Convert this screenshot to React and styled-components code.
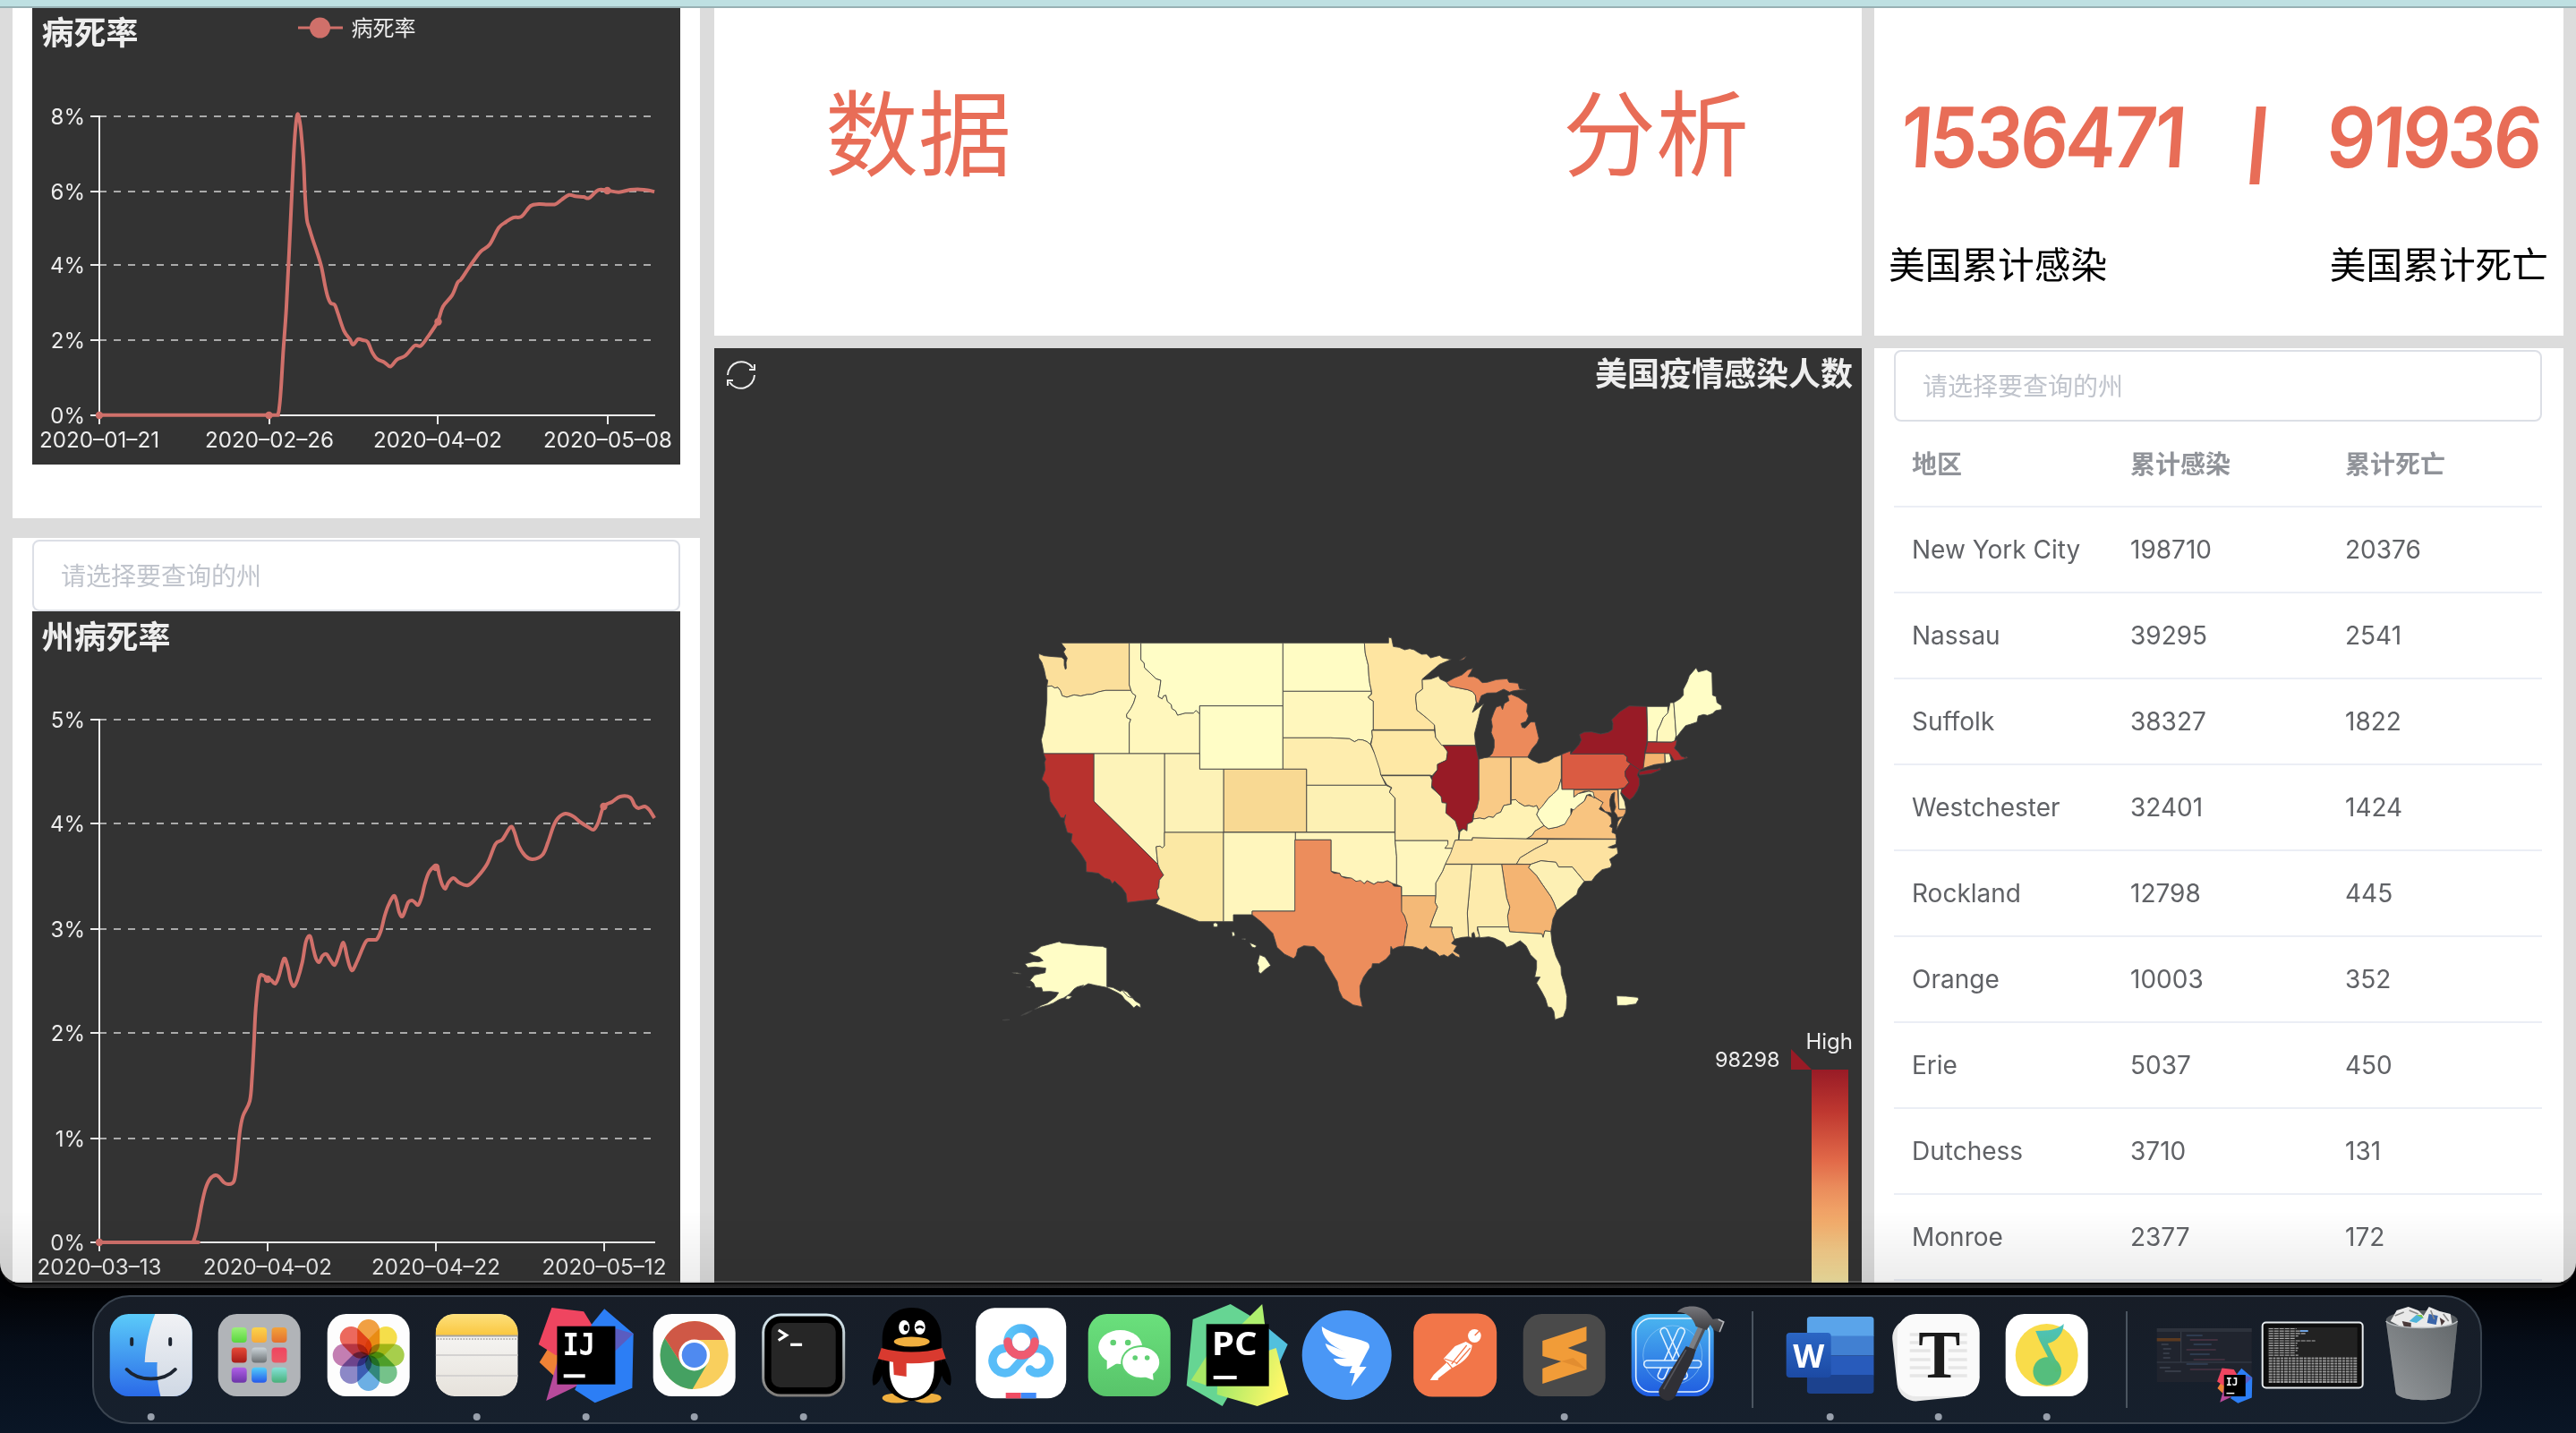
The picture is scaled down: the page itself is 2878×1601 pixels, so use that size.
import React from "react";
import styled, { createGlobalStyle } from "styled-components";

const GlobalStyle = createGlobalStyle`
  * { box-sizing: border-box; }
  html, body { margin: 0; padding: 0; }
  body {
    width: 2878px;
    height: 1601px;
    overflow: hidden;
    background: #060b16;
    font-family: Inter, "Noto Sans CJK SC", sans-serif;
    -webkit-font-smoothing: antialiased;
  }
  svg { display: block; }
`;

/* ---------- layout ---------- */

const Desktop = styled.div`
  width: 2878px;
  height: 1601px;
  display: flex;
  flex-direction: column;
  overflow: hidden;
  background: linear-gradient(180deg, #020306 0, #020306 1446px, #060d18 1500px, #0a1626 1601px);
`;

const WindowEdge = styled.div`
  width: 2878px;
  height: 1439px;
  padding-bottom: 6px;
  border-radius: 0 0 28px 28px;
  background: linear-gradient(180deg, #1c1c1d 0, #1c1c1d 1433px, #000 1433px, #1b1b1c 1435px, #2c2c2d 1439px);
  box-shadow: 0 3px 10px rgba(0, 0, 0, 0.9);
`;

const BrowserWindow = styled.main`
  position: relative;
  height: 1433px;
  display: flex;
  flex-direction: column;
  overflow: hidden;
  border-radius: 0 0 22px 22px;
  background: #dcdcdc;
`;

const TopBar = styled.div`
  flex: none;
  height: 9px;
  background: #bee0e2;
  border-bottom: 2px solid #98b1b4;
`;

const Dashboard = styled.div`
  flex: 1;
  display: grid;
  grid-template-columns: 784px 1296px 770px;
  padding: 0 14px;
  min-height: 0;
`;

const Column = styled.section`
  display: flex;
  flex-direction: column;
  gap: ${(p) => p.$gap}px;
  padding-right: ${(p) => p.$gutter || 0}px;
  min-width: 0;
  min-height: 0;
`;

const Card = styled.div`
  flex: ${(p) => (p.$height ? "none" : "1")};
  height: ${(p) => (p.$height ? `${p.$height}px` : "auto")};
  min-height: 0;
  padding: ${(p) => p.$padding || "0"};
  background: #fff;
  overflow: hidden;
`;

const DarkPanel = styled.div`
  width: ${(p) => p.$width}px;
  height: ${(p) => p.$height}px;
  background: #333;
`;

const BottomShade = styled.div`
  position: absolute;
  left: 0;
  right: 0;
  bottom: 0;
  height: 80px;
  background: linear-gradient(180deg, rgba(0, 0, 0, 0), rgba(0, 0, 0, 0.07));
  border-bottom: 2px solid rgba(150, 150, 150, 0.3);
  pointer-events: none;
`;

const SelectBox = styled.div`
  height: 80px;
  display: flex;
  align-items: center;
  padding: 1px 30px 0;
  border: 2px solid #dcdfe6;
  border-radius: 8px;
  background: #fff;
  color: #c0c4cc;
  font-size: 28px;
  line-height: 1;
`;

const Heading = styled.h1`
  margin: 0;
  padding: 90px 126px 0 124px;
  display: flex;
  justify-content: space-between;
  color: #e86d57;
  font-size: 104px;
  font-weight: 400;
  line-height: 104px;
`;

const Counters = styled.div`
  display: flex;
  justify-content: space-between;
  padding: 97px 24px 0 30px;
  height: 210px;
  color: #e86d57;
`;

const Digits = styled.span`
  font-family: Inter, "Liberation Sans", sans-serif;
  font-size: 93px;
  font-weight: 600;
  line-height: 94px;
  height: 94px;
  width: ${(p) => p.$width}px;
  white-space: nowrap;
  letter-spacing: ${(p) => p.$spacing}px;
  transform: skewX(-4deg) scaleX(${(p) => p.$stretch});
  transform-origin: left center;
`;

const Separator = styled.span`
  width: 11px;
  height: 87px;
  margin-top: 13px;
  background: #e86d57;
  transform: skewX(-5deg);
`;

const CounterLabels = styled.div`
  display: flex;
  justify-content: space-between;
  padding: 53px 17px 0 16px;
  font-size: 40.7px;
  line-height: 50px;
  color: #000;
`;

/* ---------- table ---------- */

const Table = styled.table`
  width: 724px;
  border-collapse: collapse;
  table-layout: fixed;
  font-size: 28px;
`;

const HeadCell = styled.th`
  width: ${(p) => p.$width}px;
  height: 95px;
  padding: 0 0 2px 20px;
  border-bottom: 2px solid #ebeef5;
  text-align: left;
  font-weight: 700;
  color: #909399;
`;

const Cell = styled.td`
  height: 96px;
  padding: 0 0 1px 20px;
  border-bottom: 2px solid #ebeef5;
  color: #606266;
  white-space: nowrap;
`;

/* ---------- dock ---------- */

const DockBar = styled.nav`
  margin: 8px 0 0 103px;
  width: 2670px;
  height: 144px;
  display: flex;
  align-items: stretch;
  padding: 0 3px;
  border: 2px solid #3a4450;
  border-radius: 42px;
  background: linear-gradient(180deg, #171d27, #16202d);
`;

const DockItem = styled.div`
  width: 121.45px;
  height: 140px;
  flex: none;
  svg { overflow: visible; }
`;

const DockDivider = styled.div`
  flex: none;
  width: 54px;
  display: flex;
  justify-content: center;
  padding: 16px 0 16px 3px;
  &::before {
    content: "";
    width: 2px;
    background: #4b5560;
  }
`;

/* ---------- charts ---------- */

const smooth = (pts) => {
  let d = `M${pts[0][0]},${pts[0][1]}`;
  for (let i = 0; i < pts.length - 1; i += 1) {
    const p0 = pts[i - 1] || pts[i];
    const p1 = pts[i];
    const p2 = pts[i + 1];
    const p3 = pts[i + 2] || p2;
    const k = 0.17;
    const flat = p1[1] === p2[1];
    const c1y = flat ? p1[1] : p1[1] + (p2[1] - p0[1]) * k;
    const c2y = flat ? p2[1] : p2[1] - (p3[1] - p1[1]) * k;
    d += `C${p1[0] + (p2[0] - p0[0]) * k},${c1y} ${p2[0] - (p3[0] - p1[0]) * k},${c2y} ${p2[0]},${p2[1]}`;
  }
  return d;
};

const toPoints = (list, sx, sy) => list.map(([x, y]) => [x / sx, y / sy]);

const nationalRate = toPoints([
  [218, 1212], [400, 1212], [589, 1212], [607, 1212], [612, 1185], [616, 1120], [620, 1030], [627, 900], [633, 740],
  [640, 540], [645, 410], [651, 335], [657, 360], [661, 410], [665, 480], [668, 570], [672, 640], [677, 665],
  [685, 700], [694, 735], [704, 780], [712, 835], [718, 868], [724, 885], [733, 890], [740, 915], [753, 965],
  [766, 990], [773, 1006], [784, 990], [794, 993], [805, 998], [815, 1028], [826, 1048], [842, 1058], [855, 1070],
  [869, 1050], [888, 1038], [908, 1009], [921, 1010], [936, 985], [958, 940], [970, 895], [990, 862], [1002, 825],
  [1010, 815], [1030, 775], [1052, 735], [1072, 714], [1092, 665], [1108, 648], [1124, 635], [1142, 632],
  [1162, 601], [1180, 596], [1198, 597], [1215, 597], [1230, 583], [1246, 569], [1260, 573], [1278, 575],
  [1290, 578], [1310, 555], [1330, 556], [1355, 561], [1380, 554], [1402, 553], [1418, 555], [1433, 560],
], 1.96, 2.613);

const stateRate = toPoints([
  [218, 1388], [418, 1388], [424, 1386], [432, 1372], [442, 1345], [450, 1328], [460, 1317], [472, 1313], [480, 1315],
  [490, 1321], [500, 1323], [512, 1320], [518, 1302], [525, 1265], [532, 1247], [547, 1230], [552, 1203], [556, 1167],
  [560, 1127], [568, 1092], [580, 1091], [586, 1094], [594, 1095], [603, 1099], [611, 1090], [622, 1071], [630, 1080],
  [636, 1095], [643, 1102], [651, 1095], [662, 1075], [670, 1052], [679, 1046], [686, 1060], [692, 1071], [699, 1075],
  [706, 1068], [715, 1066], [724, 1073], [733, 1078], [742, 1067], [752, 1053], [760, 1069], [766, 1080], [772, 1084],
  [782, 1074], [800, 1053], [810, 1050], [824, 1050], [834, 1040], [842, 1024], [850, 1012], [862, 1001], [868, 1006],
  [874, 1019], [881, 1024], [888, 1016], [894, 1008], [902, 1006], [908, 1008], [916, 1011], [924, 1001], [930, 988],
  [940, 974], [956, 967], [962, 978], [968, 988], [975, 993], [982, 986], [993, 981], [1005, 986], [1025, 989],
  [1045, 980], [1067, 965], [1085, 943], [1100, 938], [1118, 924], [1126, 929], [1136, 945], [1150, 956], [1166, 960],
  [1188, 955], [1200, 941], [1212, 923], [1222, 914], [1238, 909], [1255, 912], [1272, 919], [1288, 924], [1300, 927],
  [1310, 919], [1322, 901], [1340, 896], [1358, 890], [1380, 891], [1390, 900], [1398, 903], [1412, 901], [1422, 905],
  [1433, 914],
], 1.96, 1);

const LineChart = ({ view, title, titleY, legend, rows, cols, points, dots }) => {
  const base = rows[rows.length - 1][1];
  return (
    <svg width={view[2]} height={view[3]} viewBox={view.join(" ")}>
      <text x="46.5" y={titleY} fill="#eee" fontSize="36" fontWeight="700">{title}</text>
      {legend && (
        <g>
          <line x1="333" x2="383" y1="31" y2="31" stroke="#d0706a" strokeWidth="3" />
          <circle cx="357.5" cy="31" r="11.5" fill="#d0706a" />
          <text x="392.5" y="39.5" fill="#eee" fontSize="24">{legend}</text>
        </g>
      )}
      {rows.map(([label, y], i) => (
        <g key={label}>
          {i < rows.length - 1 && (
            <line x1="111" x2="731" y1={y} y2={y} stroke="#aaa" strokeWidth="2" strokeDasharray="8 8" />
          )}
          <line x1="101" x2="111" y1={y} y2={y} stroke="#eee" strokeWidth="2" />
          <text x="95" y={y + 8.5} fill="#eee" fontSize="24" textAnchor="end">{label}</text>
        </g>
      ))}
      <line x1="111" x2="111" y1={rows[0][1] - 1} y2={base + 1} stroke="#eee" strokeWidth="2" />
      <line x1="110" x2="732" y1={base} y2={base} stroke="#eee" strokeWidth="2" />
      {cols.map(([label, x, width]) => (
        <g key={label}>
          <line x1={x} x2={x} y1={base} y2={base + 10} stroke="#eee" strokeWidth="2" />
          <text x={x} y={base + 36} fill="#eee" fontSize="24" textAnchor="middle" textLength={width} lengthAdjust="spacingAndGlyphs">{label}</text>
        </g>
      ))}
      <path d={smooth(points)} fill="none" stroke="#d0706a" strokeWidth="4" strokeLinejoin="round" />
      {dots.map(([x, y]) => (
        <circle key={x} cx={x} cy={y} r="4.2" fill="#d0706a" />
      ))}
    </svg>
  );
};

/* ---------- map ---------- */

const westStates = [
  ["#fbdf9b", "M197,115H425V255L431,274H345L322,279 300,287 283,288 262,293 240,289 216,297 200,292 194,275 186,264 175,266 165,259 149,261 152,240 146,235 140,205 132,180 122,165 122,151 140,158 170,161 198,163 207,170 207,190 211,204 214,200 213,180 217,166 210,155 205,145 212,135 202,122Z"],
  ["#fff7bd", "M149,261L165,259 175,266 186,264 194,275 200,292 216,297 240,289 262,293 283,288 300,287 322,279 345,274H431L435,283 447,292 440,315 430,335 416,355 417,365 430,371 425,385V486L138,486 134,462 130,440 138,408 142,390 146,340 149,310Z"],
  ["#fff7bd", "M425,115H464V171L475,183 476,198 515,235 531,240 527,270 522,295 535,302 540,292 548,290 553,311 566,322 568,335 580,342 587,357 612,350 640,350 649,341 661,353V486H425V385L430,371 417,365 416,355 430,335 440,315 447,292 435,283 431,274 425,255Z"],
  ["#fffdc6", "M464,115H940V326H661V353L649,341 640,350 612,350 587,357 580,342 568,335 566,322 553,311 548,290 540,292 535,302 522,295 527,270 531,240 515,235 476,198 475,183 464,171Z"],
  ["#fffdc6", "M661,326H940V538H661Z"],
  ["#fffcc4", "M940,115H1213L1216,150 1226,190 1228,225 1231,250 1237,277H940Z"],
  ["#fff7bd", "M940,277H1237L1236,287 1226,296 1230,302 1243,310V405L1238,408 1240,430 1233,455 1222,446 1207,440 1193,439 1180,446 1163,436 1100,433H940Z"],
  ["#feedae", "M940,433H1100L1163,436 1180,446 1193,439 1207,440 1222,446 1233,455 1245,480 1262,510 1268,555 1285,592H1019V538H940Z"],
  ["#fdf1b4", "M1019,592H1285L1303,600 1297,615 1315,635V749H1019Z"],
  ["#f8d993", "M741,538H1019V749H741Z"],
  ["#fdf2b7", "M543,486H661V538H741V750H543Z"],
  ["#fdf3b9", "M306,486H543V795L536,802 528,796 515,798 518,830 521,857 306,645Z"],
  ["#b8322e", "M138,486H306V645L521,857 527,872 540,893 526,910 524,935 517,945 520,960 526,972 418,985 414,955 400,935 385,922 376,913 368,922 360,908 342,903 322,887 300,884 281,882 280,850 265,825 250,805 230,780 234,755 217,750 207,715 212,690 206,702 195,700 183,678 160,645 155,600 145,585 132,572 143,540 141,515 145,505Z"],
  ["#fbe8a4", "M543,750H741V1049H660L514,990 526,972 520,960 517,945 524,935 526,910 540,893 527,872 521,857 518,830 515,798 528,796 536,802 543,795Z"],
  ["#fff6bd", "M741,750H982V1014H837V1026H774V1049H741Z"],
  ["#fff5bb", "M982,750H1315L1316,780 1321,830 1321,925 1305,920 1290,912 1275,918 1258,916 1245,924 1222,912 1213,922 1185,914 1165,903 1135,897 1130,887 1101,880V775H982Z"],
  ["#ec8d5c", "M980,775H1101V880L1112,887 1130,887 1135,897 1150,903 1170,903 1185,914 1200,911 1213,922 1222,912 1245,924 1258,916 1275,918 1290,912 1305,920 1312,930 1337,932 1339,1015 1350,1035 1357,1060 1349,1100 1349,1130 1325,1134 1308,1142 1302,1132 1300,1158 1285,1175 1262,1190 1240,1190 1238,1203 1228,1210 1210,1235 1198,1265 1199,1300 1207,1335 1175,1328 1160,1318 1140,1305 1128,1280 1122,1250 1095,1205 1080,1180 1077,1165 1045,1133 1010,1130 990,1140 984,1163 976,1173 945,1158 920,1135 913,1110 906,1088 870,1052 837,1026V1014H980Z"],
  ["#fffdc6", "M190,1116L200,1121 230,1123 255,1127 280,1128 310,1131 335,1132 350,1138V1267L370,1270 395,1283 405,1277 420,1290 430,1298 445,1315 462,1325 463,1338 450,1330 440,1338 425,1322 410,1310 400,1296 385,1287 350,1270 310,1262 288,1257 265,1270 272,1262 250,1268 240,1275 225,1292 205,1305 190,1310 170,1322 155,1328 130,1335 107,1343 130,1330 150,1322 178,1302 188,1287 160,1283 135,1284 131,1270 110,1270 104,1255 92,1246 108,1228 143,1220 145,1205 110,1201 85,1203 75,1190 105,1183 120,1184 136,1180 125,1168 105,1163 88,1153 110,1148 130,1132 160,1124Z"],
  ["#fffdc6", "M210,1308L218,1297 234,1300 222,1309Z"],
  ["#fffdc6", "M32,1220L50,1220 62,1224 46,1223ZM80,1268L94,1267 92,1270ZM400,1278L418,1285 434,1305 420,1300Z"],
  ["#55554c", "M62,1364L80,1354 100,1347 82,1358ZM0,1379L14,1377 24,1378 10,1380Z"],
  ["#fffdc6", "M706,1056L714,1052 722,1058 720,1067 708,1067ZM768,1084L776,1083 780,1096 771,1099ZM802,1107L814,1106 814,1110ZM828,1120L840,1124 852,1130 846,1137 836,1134ZM862,1160L880,1168 890,1182 899,1196 880,1210 866,1223 858,1218 859,1200 854,1190Z"],
];

const eastStates = [
  ["#fee5a1", "M-17,115H64V96L74,98 80,127 100,130 118,138 135,134 150,138 160,145 175,153 192,152 205,165 235,157 245,165 274,170 235,187 205,212 177,236 178,270 157,285 155,300 159,340 190,365 212,380 218,390V406H13V310L0,302 -4,296 7,287 7,277 1,250 -2,225 -4,190 -14,150Z"],
  ["#fee8a5", "M8,408H218L222,432 242,455 258,470 262,480 258,508 228,522 228,540 210,560 203,558H38L35,540 15,480 5,455 10,430Z"],
  ["#fdecac", "M177,238L205,236 232,226 237,236 260,247 270,260 300,266 330,272 345,278 355,290 358,315 345,348 384,318 372,340 366,365 352,420 356,458H242L222,432 218,390 190,365 159,340 155,300 157,285 178,270Z"],
  ["#ec8a5b", "M258,247L285,232 310,222 330,205 346,200 340,212 330,228 350,228 365,235 378,248 395,247 425,238 462,235 468,247 498,250 503,268 524,272 500,273 480,276 470,280 450,270 425,282 395,283 375,292 365,318 358,312 355,290 345,278 330,272 300,266 270,260Z"],
  ["#ec8a5b", "M463,292L475,287 500,298 510,305 530,320 527,345 533,360 525,378 508,385 512,398 522,400 540,380 555,380 562,410 568,435 562,450 545,470 530,498H400L412,485 418,465 418,440 408,415 412,395 408,372 418,345 425,330 440,325 446,338 452,318 468,308Z"],
  ["#ec8a5b", "M302,173L324,160 316,170Z"],
  ["#981b26", "M247,459H356L366,508 367,640 360,670 348,690 345,715 328,722 327,745 310,738 297,748 288,712 270,700 256,685 258,652 243,650 240,630 225,615 208,590 210,565 228,540 228,522 258,508 262,480Z"],
  ["#f9ca86", "M367,505L385,500 400,498H473V655L450,660 440,682 425,688 415,700 400,697 385,705 370,702 348,705 350,685 360,670 367,640Z"],
  ["#f9ca86", "M475,498H530L545,508 568,518 598,512 620,498 643,490V570L632,605 615,622 600,635 585,655 577,668 567,675 560,660 550,664 535,660 520,662 500,650 490,640 475,642Z"],
  ["#da5b42", "M645,488L674,477V487H852L864,498 862,510 875,520 857,545 858,562 870,583 855,600 835,605 645,606Z"],
  ["#981b26", "M674,487L690,470 703,455 710,440 704,422 720,414 745,413 775,420 800,415 815,405 816,385 812,372 840,345 870,326 928,328 932,400 930,450 923,480 922,535 908,540 905,547 935,540 965,538 974,533 976,540 945,553 905,558 903,545 875,520 862,510 864,498 852,487Z"],
  ["#fffcc3", "M930,328H1000L1000,350 985,365 975,390 965,410 963,446H932L932,400Z"],
  ["#fff9be", "M1000,350L1008,315 1020,315 1024,370 1028,425 1022,447H963L965,410 975,390 985,365Z"],
  ["#fffdc6", "M1020,315L1040,303 1052,290 1052,270 1065,245 1072,225 1095,198 1102,212 1130,205 1148,215 1150,290 1162,295 1165,315 1180,325 1180,338 1160,342 1150,352 1133,358 1120,355 1102,360 1098,380 1075,388 1060,392 1045,410 1030,430 1028,425 1024,370Z"],
  ["#b32c2d", "M932,447L1012,448 1030,440 1028,455 1022,468 1035,480 1045,495 1060,500 1062,495 1066,500 1045,507 1022,510 1008,487 925,483 930,460Z"],
  ["#f3b36f", "M924,485H990V518L955,523 918,535Z"],
  ["#fff2b8", "M990,486H1006L1012,510 1006,515 992,518Z"],
  ["#981b26", "M875,520L905,540 898,558 905,570 905,590 898,610 885,630 872,641 860,632 840,612 855,600 870,583 858,562 857,545Z"],
  ["#f3ae6d", "M685,607H832L836,672H860L858,685 850,698 832,700 828,690 820,680 825,665 820,640 822,615 812,622 806,640 806,660 812,685 790,680 783,672 773,660 783,650 755,632 740,612 720,612 700,620 685,632Z"],
  ["#fff2b8", "M834,604L845,604 842,620 855,645 860,672H836Z"],
  ["#f8c480", "M525,770L545,760 555,745 585,727 600,738 630,732 655,722 660,705 675,690 685,665 700,660 720,645 730,625 754,632 783,650 770,672 795,685 810,700 812,720 805,730 815,735 813,750 825,755 828,772ZM828,740L832,715 838,705 850,698 842,715Z"],
  ["#fffdc6", "M643,570L645,606H685V632L700,620 735,612 750,615 754,636 740,622 728,625 720,645 700,660 685,675 675,670 675,690 665,705 655,722 630,732 600,738 585,727 572,710 560,690 567,675 577,665 585,655 600,635 615,622 632,605Z"],
  ["#fff2b4", "M300,775L303,748 315,738 327,745 328,722 345,715 348,705 370,702 385,705 400,697 415,700 425,688 440,682 450,660 475,655 475,642 490,640 500,650 520,662 535,660 550,664 560,660 567,675 560,690 572,710 585,727 555,745 545,760 525,772 345,768V776Z"],
  ["#fde2a0", "M287,776H345V768L598,773 595,785 575,795 555,805 530,820 505,835 493,856H254L265,830Z"],
  ["#fde2a0", "M598,773H828L826,790 800,800 815,803 830,800 833,820 820,830 805,840 812,858 808,868 780,875 758,895 745,913 720,914 680,866H634L625,850 575,845 540,857 493,856 505,835 530,820 555,805 575,795 595,785Z"],
  ["#fdf0b4", "M533,868L540,857 575,845 625,850 634,866 680,866 720,914 700,940 695,958 660,985 628,1012 618,985 608,965 580,925 560,895Z"],
  ["#f4b472", "M443,857H540L533,868 560,895 580,925 608,965 618,985 628,1012 615,1040 608,1082 588,1080 582,1102 578,1090 470,1083 463,1060 463,1030 470,1000 460,970Z"],
  ["#fdebac", "M343,857H443L460,970 470,1000 463,1030 467,1067H362L362,1078 370,1100 355,1103 350,1085 344,1088 343,1103 332,1100 328,1020Z"],
  ["#fdebac", "M254,857H343L328,1020 332,1100 310,1102 285,1108 275,1080 277,1068H203L212,1040 228,1000 220,985 222,962 222,920 245,880Z"],
  ["#f4b977", "M108,962H222L220,985 228,1000 212,1040 203,1068H277L275,1080 285,1110 275,1122 293,1130 282,1148 302,1160 303,1170 290,1165 278,1155 262,1167 250,1160 235,1165 222,1152 200,1143 190,1132 178,1143 145,1133 115,1132 121,1100 127,1060 118,1030 108,1015Z"],
  ["#fff6bd", "M86,777H263L265,790 253,803 278,803 272,820 254,857 245,880 222,920V962H108V932L91,925V830Z"],
  ["#fdebac", "M40,560H203L210,575 208,600 225,615 240,630 243,650 258,652 256,685 288,712 300,750 298,775 287,776 278,803 253,803 263,790V777H86V635L67,615 75,600 58,590Z"],
  ["#fdf3b7", "M362,1067H467L470,1083 578,1090 582,1102 588,1080 608,1082 612,1120 625,1165 642,1200 643,1225 655,1265 662,1300 660,1340 650,1368 622,1378 618,1350 610,1337 598,1335 590,1308 578,1285 560,1255 572,1235 554,1235 560,1205 560,1180 540,1160 525,1130 505,1113 480,1128 460,1135 450,1120 420,1105 400,1100 370,1103Z"],
  ["#fffdc6", "M828,1298L860,1299 900,1303 902,1310 893,1325 860,1330 830,1330Z"],
];

const UsMap = () => (
  <svg width="1282" height="1044" viewBox="798 389 1282 1044">
    <defs>
      <linearGradient id="heat" x1="0" y1="0" x2="0" y2="1">
        <stop offset="0" stopColor="#981b26" />
        <stop offset="0.2" stopColor="#bf3830" />
        <stop offset="0.43" stopColor="#e26a49" />
        <stop offset="0.55" stopColor="#ea8b5b" />
        <stop offset="0.72" stopColor="#f3ad6c" />
        <stop offset="0.85" stopColor="#f2ca88" />
        <stop offset="1" stopColor="#f2e3a0" />
      </linearGradient>
    </defs>
    <g fill="none" stroke="#eee" strokeWidth="2">
      <path d="M813,419a15.3,15.3 0 0 1 28,-8M843,419a15.3,15.3 0 0 1 -28,8" />
      <path d="M843,407v6h-6M813,431v-6h6" />
    </g>
    <text x="2070" y="431" fill="#eee" fontSize="36" fontWeight="700" textAnchor="end">美国疫情感染人数</text>
    <g stroke="#444" strokeWidth="2.6" strokeLinejoin="round">
      <g transform="translate(1120 680) scale(.33333)">
        {westStates.map(([fill, d]) => <path key={d} d={d} fill={fill} />)}
      </g>
      <g transform="translate(1530 680) scale(.33333)">
        {eastStates.map(([fill, d]) => <path key={d} d={d} fill={fill} />)}
      </g>
    </g>
    <text x="2070" y="1172" fill="#eee" fontSize="24" textAnchor="end">High</text>
    <text x="1988.5" y="1191.5" fill="#eee" fontSize="23.5" textAnchor="end">98298</text>
    <path d="M2001,1172V1195H2024Z" fill="#981b26" />
    <rect x="2024" y="1195" width="41" height="238" fill="url(#heat)" />
  </svg>
);

/* ---------- dock icons, drawn around a 0,0 centre ---------- */

const Tile = ({ fill, size = 92, r = 21, ...rest }) => (
  <rect x={-size / 2} y={-size / 2} width={size} height={size} rx={r} fill={fill} {...rest} />
);

const Grad = ({ id, from, to, x2 = 0, y2 = 1 }) => (
  <linearGradient id={id} x1="0" y1="0" x2={x2} y2={y2}>
    <stop offset="0" stopColor={from} />
    <stop offset="1" stopColor={to} />
  </linearGradient>
);

const Finder = () => (
  <g>
    <Grad id="fb" from="#5bcbf9" to="#2a6ae8" />
    <Grad id="fw" from="#f1f2f5" to="#cfd8e4" />
    <clipPath id="fc"><Tile /></clipPath>
    <Tile fill="url(#fb)" />
    <path clipPath="url(#fc)" fill="url(#fw)" d="M5,-47C-2,-30 -6,-12 -7,8H7C6,22 8,36 11,47H47V-47Z" />
    <path d="M-21.5,-18v6M21.5,-18v6M-27,16C-14,30 14,30 27,16" stroke="#1c2430" strokeWidth="4" strokeLinecap="round" fill="none" />
  </g>
);

const padColors = [
  ["#9bf07a", "#58d63c"], ["#fbd34a", "#f5a93a"], ["#f2a23a", "#e3702f"],
  ["#e84a38", "#a81c18"], ["#ccd5da", "#6c7174"], ["#f04460", "#ea5a66"],
  ["#b060e8", "#6c34a8"], ["#52cffa", "#2558ea"], ["#86e2d8", "#48b07a"],
];
const Launchpad = () => (
  <g>
    <Tile fill="#b1b4b8" />
    {padColors.map(([from, to], i) => (
      <g key={from}>
        <Grad id={`lp${i}`} from={from} to={to} />
        <rect x={-31 + (i % 3) * 22.4} y={-31 + Math.floor(i / 3) * 22.4} width="17" height="17" rx="4" fill={`url(#lp${i})`} />
      </g>
    ))}
  </g>
);

const petals = ["#f3a143", "#f7e04a", "#a8d04c", "#76c48b", "#6db1e6", "#8d89c9", "#c57fb4", "#ee6a5e"];
const Petal = styled.rect`
  mix-blend-mode: multiply;
`;
const Photos = () => (
  <g>
    <Tile fill="#fdfdfd" />
    {petals.map((c, i) => (
      <Petal key={c} x="-12.5" y="-40" width="25" height="40" rx="12.5" fill={c} transform={`rotate(${i * 45})`} />
    ))}
  </g>
);

const Notes = () => (
  <g>
    <Grad id="nw" from="#fafafa" to="#e6e2db" />
    <Grad id="ny" from="#fde07c" to="#fac73f" />
    <clipPath id="nc"><Tile /></clipPath>
    <g clipPath="url(#nc)">
      <Tile fill="url(#nw)" />
      <rect x="-46" y="-46" width="92" height="24" fill="url(#ny)" />
      <path d="M-46,-21.5H46" stroke="#a5a39f" strokeWidth="2" />
      <path d="M-46,0H46M-46,23H46" stroke="#d4d2d1" strokeWidth="2" />
      <path d="M-44,-18H46" stroke="#b4b2ae" strokeWidth="2" strokeDasharray="1.6 1.6" />
    </g>
  </g>
);

const Idea = () => (
  <g>
    <path fill="#ee8236" d="M-42,-8L-52,8 -35,24 -28,0Z" />
    <path fill="#b74a9b" d="M-30,0L-44.5,51 -5,32 -10,10Z" />
    <path fill="#ef4560" d="M-38.3,-53L-2.5,-48.7 9,-30 0,0 -34,0 -53,-12Z" />
    <path fill="#2c7ef5" d="M20.5,-51.7L53,-24 51.7,36.7 10,53.3 -12.5,38.7 0,10 6,-34Z" />
    <path fill="#5a5cc0" d="M53,-24L32,-4V-30Z" />
    <rect x="-32.3" y="-32.3" width="65" height="65" fill="#000" />
    <text x="-26" y="0" fill="#fff" fontSize="34" fontWeight="700" fontFamily='"DejaVu Sans Mono", monospace' textLength="36" lengthAdjust="spacingAndGlyphs">IJ</text>
    <rect x="-25" y="21.3" width="24" height="4" fill="#fff" />
  </g>
);

const Chrome = () => (
  <g>
    <Tile fill="#fdfdfd" />
    <circle r="38" fill="#f9cf5d" />
    <path fill="#cf5846" d="M-33,-19A38,38 0 0 1 34,-17H0L-15,9Z" />
    <path fill="#45a162" d="M-33,-19A38,38 0 0 0 -2,38L15,9 0,17 -15,9Z" />
    <circle r="17.4" fill="#fff" />
    <circle r="14" fill="#4f8af0" />
  </g>
);

const Terminal = () => (
  <g>
    <Grad id="tg" from="#d7eaf2" to="#7e7b78" />
    <Tile fill="url(#tg)" size={93} />
    <Tile fill="#000" size={87} r={18} />
    <Tile fill="#262626" size={72} r={10} />
    <path d="M-28,-28L-19,-22.3 -28,-16.5" stroke="#fff" strokeWidth="3.2" fill="none" />
    <path d="M-14.6,-11.7h13" stroke="#fff" strokeWidth="3.2" />
  </g>
);

const Penguin = () => (
  <g>
    <ellipse cx="-17" cy="48" rx="16" ry="5.5" fill="#efaf3f" />
    <ellipse cx="17" cy="48" rx="16" ry="5.5" fill="#efaf3f" />
    <path fill="#000" d="M-34,0C-42,12 -46,26 -43,34C-38,33 -34,26 -32,18ZM34,0C42,12 46,26 43,34C38,33 34,26 32,18Z" />
    <ellipse cx="0" cy="16" rx="34" ry="35" fill="#000" />
    <path fill="#000" d="M-33,-6V-18C-33,-40 -19,-53 0,-53S33,-40 33,-18V-6Z" />
    <path fill="#fff" d="M-25,2V15C-25,36 -14,48 0,48S25,36 25,15V2Z" />
    <path fill="#d93a2f" d="M-34,-8C-14,-2 14,-2 34,-8L38,4C14,11 -14,11 -38,4Z" />
    <path fill="#d93a2f" d="M-21,4H-6V24L-20,22Z" />
    <ellipse cx="-8.5" cy="-31" rx="6" ry="8" fill="#fff" />
    <ellipse cx="9" cy="-31" rx="6" ry="8" fill="#fff" />
    <ellipse cx="-6.5" cy="-30.5" rx="2.6" ry="3.5" fill="#000" />
    <path d="M5,-30Q9,-34 13,-30" stroke="#000" strokeWidth="2.4" fill="none" />
    <ellipse cx="0" cy="-15" rx="20" ry="5.5" fill="#efaf3f" />
  </g>
);

const NetDisk = () => (
  <g>
    <Grad id="bt" from="#5cc6f8" to="#4ba9f2" x2={1} y2={0} />
    <rect x="-50.5" y="-52.7" width="101" height="101" rx="21" fill="#fff" />
    <g fill="none" strokeWidth="9.5" strokeLinecap="round">
      <path stroke="#58bdf8" d="M-19,-7.5A13.7,13.7 0 1 0 -9,16.5L9,-4A13.7,13.7 0 1 1 19,20C15,20 12,19 10,16" />
      <circle cx="0.3" cy="-15" r="15" stroke="url(#bt)" />
      <path stroke="#ef5a70" d="M-14.7,-15A15,15 0 0 0 15.3,-15" />
    </g>
    <rect x="-17" y="42" width="17" height="6.3" fill="#ef4c63" />
    <rect x="0" y="42" width="17" height="6.3" fill="#3f8af8" />
  </g>
);

const WeChat = () => (
  <g>
    <Grad id="wg" from="#6ae07c" to="#58c46a" />
    <Tile fill="url(#wg)" />
    <ellipse cx="-10" cy="-9" rx="24.5" ry="19" fill="#fff" />
    <path fill="#fff" d="M-25,3V16L-12,8Z" />
    <ellipse cx="13" cy="8" rx="22.5" ry="19" fill="#60d072" />
    <ellipse cx="13" cy="8" rx="20.5" ry="17" fill="#fff" />
    <path fill="#fff" d="M14,23L27,28 26,18Z" />
    <g fill="#60d072">
      <circle cx="-18" cy="-14" r="3.3" /><circle cx="-1.5" cy="-14" r="3.3" />
      <circle cx="6.5" cy="3" r="2.8" /><circle cx="20" cy="3" r="2.8" />
    </g>
  </g>
);

const PyCharm = () => (
  <g>
    <Grad id="pl" from="#8fe668" to="#fdf768" x2={1} y2={0.3} />
    <path fill="#66d593" d="M-8,-57L-50,-40 -57,34 -17,57 5,20 14,-44Z" />
    <path fill="#aef06e" d="M27.5,-57L31,-30H0Z" />
    <path fill="#52c0dd" d="M33,-31L56,-12 46,10H30Z" />
    <path fill="#a9e867" d="M-34,0L-52,28 -34,34Z" />
    <path fill="url(#pl)" d="M43,-8L57,44 22,57 -23,44 -22,20 20,0Z" />
    <rect x="-35" y="-34.7" width="70" height="69.4" fill="#000" />
    <text x="-29" y="0" fill="#fff" fontSize="36" fontWeight="700" fontFamily='"Open Sans", sans-serif' textLength="51" lengthAdjust="spacingAndGlyphs">PC</text>
    <rect x="-27" y="23" width="26" height="4" fill="#fff" />
  </g>
);

const DingTalk = () => (
  <g>
    <circle r="50" fill="#4a97f6" />
    <path fill="#fff" d="M-28,-32C-15,-22 10,-20 23,-14Q26,-12 25,-8L14,13H22L5,35L9,20H3L6,12C-3,14 -12,11 -15,4L0,4C-12,3 -22,-4 -24,-13L-2,-4C-18,-10 -28,-20 -28,-32Z" />
  </g>
);

const Postman = () => (
  <g>
    <Tile fill="#f27649" size={93} />
    <ellipse cx="21.7" cy="-21.5" rx="7.3" ry="7.5" fill="#fff" />
    <path d="M22,-22L27,-27" stroke="#f27649" strokeWidth="1.5" />
    <path fill="#fff" d="M12,-15L19,-11C18,-2 13,4 6,9L-6,16 -19,26 -19,28H-28L-24,22 -9,8 -13,4 0,-10Z" />
    <path d="M13,-11L-4,10M17,-8L1,10M-12,4L3,9M-9,8L-3,15" stroke="#f27649" strokeWidth="1.2" />
  </g>
);

const Sublime = () => (
  <g>
    <Tile fill="#4a4a4a" />
    <path fill="#f19c38" d="M24.8,-32L-24.4,-16V1L-3.4,7 -24.4,15V32L24.8,16V-.7L4,-8 24.8,-16Z" />
    <path fill="#d8842c" d="M-3.4,7L10,3 24.8,16Z" opacity=".6" />
  </g>
);

const Xcode = () => (
  <g>
    <Grad id="xb" from="#4cb8f0" to="#1f5be0" />
    <Grad id="xh" from="#77777c" to="#38383c" />
    <Tile fill="url(#xb)" />
    <rect x="-41" y="-41" width="82" height="82" rx="17" fill="none" stroke="#e5f3ff" strokeWidth="1.6" />
    <circle r="33" fill="none" stroke="#8fc8f5" strokeWidth="1" opacity=".7" />
    <g fill="none" stroke="#e5f3ff" strokeWidth="1.6">
      <rect x="-4" y="-32" width="8" height="62" rx="4" transform="rotate(24 0 0) translate(-2 0)" />
      <rect x="-4" y="-32" width="8" height="62" rx="4" transform="rotate(-24 0 0) translate(2 0)" />
      <rect x="-32" y="6" width="64" height="8" rx="4" fill="#3f8eea" />
    </g>
    <path d="M34,-34L21,-6" stroke="#7d7f84" strokeWidth="8" />
    <path d="M36.5,-32L24,-5" stroke="#505258" strokeWidth="3" />
    <path fill="#303036" d="M15,-10L26,-6Q24,4 18,14L3,46Q-2,53 -9,50Q-17,47 -15,38Z" />
    <path d="M15,-6L-10,38" stroke="#55555c" strokeWidth="1.6" />
    <path fill="url(#xh)" d="M5,-48C12,-57 30,-56 38,-49L45,-40 50,-41 58,-37 53,-25 46,-28 42,-34 38,-28 26,-32C23,-42 16,-48 5,-48Z" />
    <path d="M51,-40L57,-37 52.5,-26" stroke="#b4b6ba" strokeWidth="1.6" fill="none" />
  </g>
);

const Word = () => (
  <g>
    <clipPath id="wc"><rect x="-26" y="-43" width="75" height="86" rx="4" /></clipPath>
    <Grad id="wb" from="#2b66c4" to="#1c4aa4" />
    <g clipPath="url(#wc)">
      <rect x="-26" y="-43" width="75" height="22" fill="#5aa4ea" />
      <rect x="-26" y="-21.5" width="75" height="22" fill="#4180d2" />
      <rect x="-26" y="0.5" width="75" height="22" fill="#285bbb" />
      <rect x="-26" y="22" width="75" height="22" fill="#1c428e" />
    </g>
    <rect x="-49" y="-25" width="50" height="50" rx="4" fill="url(#wb)" />
    <text x="-24" y="13.5" fill="#fff" fontSize="36" fontWeight="700" fontFamily='"Open Sans", sans-serif' textAnchor="middle" textLength="35" lengthAdjust="spacingAndGlyphs">W</text>
  </g>
);

const Typora = () => (
  <g>
    <Tile fill="#e9e9e9" transform="translate(-3 3) rotate(-6)" />
    <Tile fill="#fafafa" />
    <path d="M-32,-23H32M-32,-14H32M-32,-5H32M-32,5H32M-32,14H32M-32,23H32" stroke="#e6e6e6" strokeWidth="3.6" />
    <rect x="-22" y="-27" width="46" height="18" fill="#fafafa" />
    <rect x="-9" y="-10" width="20" height="38" fill="#fafafa" />
    <text x="1" y="25" fill="#1c1c1c" fontSize="76" fontWeight="700" fontFamily='"Liberation Serif", serif' textAnchor="middle" textLength="47" lengthAdjust="spacingAndGlyphs">T</text>
  </g>
);

const Music = () => (
  <g>
    <Grad id="mg" from="#4cc3c0" to="#57bd72" />
    <Tile fill="#fff" />
    <circle r="35" fill="#f9dc4a" />
    <circle cx="0.5" cy="18" r="15.8" fill="#55be7d" />
    <path fill="url(#mg)" d="M-12.5,-27C0,-27 12,-28 19,-35C19,-26 12,-15 1,-13L16,17 10,19 -8,-16Z" />
  </g>
);

const codeRows = [6, 11, 16, 22, 27, 33, 38, 44];
const IdeaWindow = () => (
  <g>
    <rect x="-53" y="-30" width="106" height="60" fill="#20242e" />
    <rect x="-53" y="-30" width="106" height="4" fill="#2d323c" />
    <rect x="-53" y="-19" width="27" height="3.5" fill="#5b3a20" />
    <path d="M-53,8H53M-26,-26V8" stroke="#3b404c" strokeWidth="1" />
    {codeRows.map((y, i) => (
      <path key={y} d={`M${-20 + (i % 3) * 4},${y - 28}h${18 + ((i * 13) % 24)}`} stroke={i % 2 ? "#5c3a4c" : "#3a4c66"} strokeWidth="1.2" />
    ))}
    <path d="M-48,-12h8M-46,-7h9M-46,-2h7M-46,3h8M-50,14h12M-44,18h18" stroke="#4c5360" strokeWidth="1.2" />
    <g transform="translate(34 34) scale(.37)"><Idea /></g>
  </g>
);

const shortLines = [31, 35, 42, 33, 30, 52, 32, 31, 33, 32, 30, 33];
const TerminalWindow = () => (
  <g>
    <rect x="-56" y="-36.5" width="112" height="73" rx="4" fill="#0d0d0d" stroke="#e8edf0" strokeWidth="2" />
    <rect x="-50" y="-31" width="100" height="33" fill="#222" />
    {shortLines.map((w, i) => (
      <path key={i} d={`M-49,${-29.5 + i * 2.7}h${w}`} stroke="#a9a9a9" strokeWidth="1.2" strokeDasharray="5 1" />
    ))}
    <path d="M-14,-27h9" stroke="#6fa2e0" strokeWidth="2" />
    {[3.5, 6.5, 9.5, 12.5, 15.5, 18.5, 21.5, 24.5, 27.5, 30].map((y) => (
      <path key={y} d={`M-49,${y}h99`} stroke="#9a9a9a" strokeWidth="1.9" strokeDasharray="4 .8 3 .8" />
    ))}
  </g>
);

const Trash = () => (
  <g>
    <Grad id="tr" from="#6e7376" to="#9a9ea1" />
    <Grad id="ts" from="#8d9194" to="#54595c" x2={1} y2={0} />
    <ellipse cx="0" cy="-39" rx="40" ry="11" fill="#565b5f" />
    <path fill="#e9e9e9" d="M-35,-38L-28,-50 -15,-54 -4,-50 2,-44 8,-54 20,-49 32,-46 34,-34 10,-28 -20,-30Z" />
    <path fill="#4fb3d9" d="M-14,-38L-6,-45 2,-42 -6,-36Z" />
    <path fill="#79c943" d="M-6,-45L0,-45 2,-41Z" />
    <path fill="#3a64a8" d="M8,-46L18,-44 16,-34 6,-36Z" />
    <path fill="#4a3a3a" d="M-22,-38L-12,-36 -12,-31 -20,-32ZM20,-42L26,-38 22,-33Z" />
    <path d="M-30,-44L-20,-48M-14,-50L-4,-46M10,-50L14,-40M24,-46L30,-38" stroke="#888" strokeWidth="1.6" />
    <path fill="url(#tr)" d="M-40,-38C-32,-28 32,-28 40,-38L32,42C30,53 -26,53 -29,42Z" />
    <path fill="url(#ts)" opacity=".45" d="M-40,-38C-32,-28 32,-28 40,-38L32,42C30,53 -26,53 -29,42Z" />
    <path d="M-40,-38C-32,-28 32,-28 40,-38" stroke="#b9bdc0" strokeWidth="1.4" fill="none" />
  </g>
);

const apps = [
  [Finder, true], [Launchpad], [Photos], [Notes, true], [Idea, true], [Chrome, true], [Terminal, true], [Penguin],
  [NetDisk], [WeChat], [PyCharm], [DingTalk], [Postman], [Sublime, true], [Xcode],
];
const documents = [[Word, true], [Typora, true], [Music, true]];
const minimized = [[IdeaWindow], [TerminalWindow], [Trash]];

const DockGroup = ({ items }) =>
  items.map(([Icon, running], i) => (
    <DockItem key={i}>
      <svg width="121.45" height="140" viewBox="-60.7 -65 121.45 140">
        <Icon />
        {running && <circle cy="69" r="4" fill="#98a0ac" />}
      </svg>
    </DockItem>
  ));

/* ---------- data ---------- */

const regions = [
  ["New York City", "198710", "20376"],
  ["Nassau", "39295", "2541"],
  ["Suffolk", "38327", "1822"],
  ["Westchester", "32401", "1424"],
  ["Rockland", "12798", "445"],
  ["Orange", "10003", "352"],
  ["Erie", "5037", "450"],
  ["Dutchess", "3710", "131"],
  ["Monroe", "2377", "172"],
];

export default function App() {
  return (
    <>
      <GlobalStyle />
      <Desktop>
        <WindowEdge>
          <BrowserWindow>
            <TopBar />
            <Dashboard>
              <Column $gap={22} $gutter={16}>
                <Card $height={570} $padding="0 22px">
                  <DarkPanel $width={724} $height={510}>
                    <LineChart
                      view={[36, 9, 724, 510]}
                      title="病死率"
                      titleY={50}
                      legend="病死率"
                      rows={[["8%", 130], ["6%", 214], ["4%", 296], ["2%", 380], ["0%", 464]]}
                      cols={[["2020–01–21", 111, 134], ["2020–02–26", 301, 144], ["2020–04–02", 489, 144], ["2020–05–08", 679, 144]]}
                      points={nationalRate}
                      dots={[[111, 464], [300.5, 464], [489.5, 359.5], [678.5, 213]]}
                    />
                  </DarkPanel>
                </Card>
                <Card $padding="2px 22px 0">
                  <SelectBox>请选择要查询的州</SelectBox>
                  <DarkPanel $width={724} $height={750}>
                    <LineChart
                      view={[36, 683, 724, 750]}
                      title="州病死率"
                      titleY={724.5}
                      rows={[["5%", 804], ["4%", 920], ["3%", 1038], ["2%", 1154], ["1%", 1272], ["0%", 1388]]}
                      cols={[["2020–03–13", 111, 139], ["2020–04–02", 299, 144], ["2020–04–22", 487, 144], ["2020–05–12", 675, 139]]}
                      points={stateRate}
                      dots={[[111, 1388], [299, 1094], [487, 969], [674.5, 901]]}
                    />
                  </DarkPanel>
                </Card>
              </Column>
              <Column $gap={14} $gutter={14}>
                <Card $height={366}>
                  <Heading>
                    <span>数据</span>
                    <span>分析</span>
                  </Heading>
                </Card>
                <DarkPanel $width={1282} $height={1044}>
                  <UsMap />
                </DarkPanel>
              </Column>
              <Column $gap={14}>
                <Card $height={366}>
                  <Counters>
                    <Digits $width={320} $stretch={0.91} $spacing={-3.5}>1536471</Digits>
                    <Separator />
                    <Digits $width={240} $stretch={0.915} $spacing={-3.5}>91936</Digits>
                  </Counters>
                  <CounterLabels>
                    <span>美国累计感染</span>
                    <span>美国累计死亡</span>
                  </CounterLabels>
                </Card>
                <Card $padding="2px 24px 0 22px">
                  <SelectBox>请选择要查询的州</SelectBox>
                  <Table>
                    <thead>
                      <tr>
                        <HeadCell $width={244}>地区</HeadCell>
                        <HeadCell $width={240}>累计感染</HeadCell>
                        <HeadCell $width={240}>累计死亡</HeadCell>
                      </tr>
                    </thead>
                    <tbody>
                      {regions.map(([name, cases, deaths]) => (
                        <tr key={name}>
                          <Cell>{name}</Cell>
                          <Cell>{cases}</Cell>
                          <Cell>{deaths}</Cell>
                        </tr>
                      ))}
                    </tbody>
                  </Table>
                </Card>
              </Column>
            </Dashboard>
            <BottomShade />
          </BrowserWindow>
        </WindowEdge>
        <DockBar>
          <DockGroup items={apps} />
          <DockDivider />
          <DockGroup items={documents} />
          <DockDivider />
          <DockGroup items={minimized} />
        </DockBar>
      </Desktop>
    </>
  );
}
